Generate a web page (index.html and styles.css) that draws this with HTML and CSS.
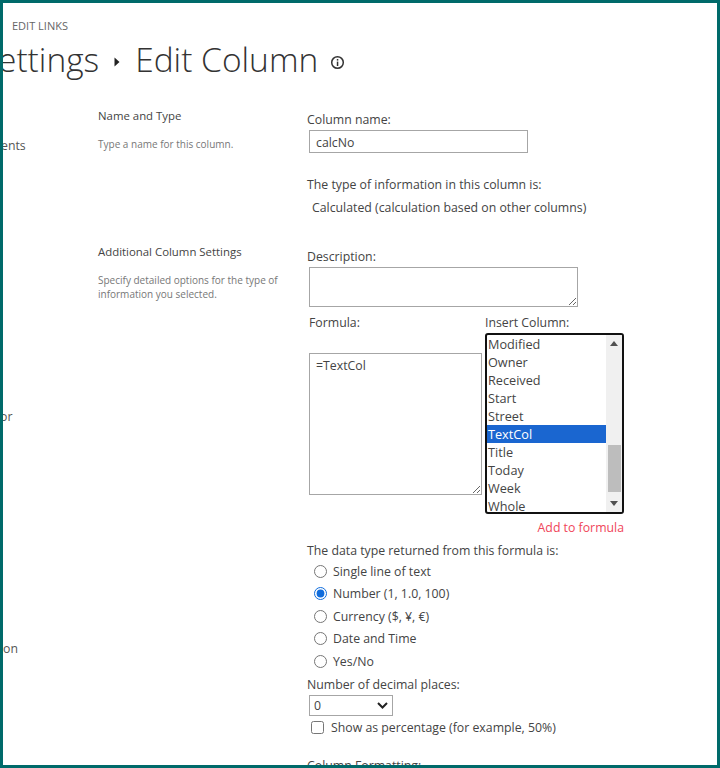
FILE: index.html
```html
<!DOCTYPE html>
<html lang="en">
<head>
  <meta charset="UTF-8" />
  <title>Settings - Edit Column</title>
  <link rel="stylesheet" href="styles.css">
</head>
<body>
  <div class="frame">
    <div class="edit-links">EDIT LINKS</div>

    <div class="title-row">
      <h1>ettings</h1>
      <svg class="crumb-arrow" width="6" height="10" viewBox="0 0 6 10"><path d="M0.5 0.5 L5.5 5 L0.5 9.5 Z" fill="#222"/></svg>
      <h1>Edit Column</h1>
      <svg class="info-icon" width="15" height="15" viewBox="0 0 15 15">
        <circle cx="7.5" cy="7.5" r="5.8" fill="none" stroke="#333" stroke-width="1.5"/>
        <rect x="6.8" y="6.6" width="1.5" height="4.4" fill="#333"/>
        <rect x="6.8" y="4" width="1.5" height="1.6" fill="#333"/>
      </svg>
    </div>

    <div class="content">
      <div class="nav">
        <div class="nav-item nav-a">ents</div>
        <div class="nav-item nav-b">or</div>
        <div class="nav-item nav-c">on</div>
      </div>

      <div class="sections">
        <div class="section-name">
          <h3>Name and Type</h3>
          <p>Type a name for this column.</p>
        </div>
        <div class="section-body section-first">
          <label class="field-label" for="colName">Column name:</label>
          <input class="text-input" id="colName" type="text" value="calcNo" />
          <div class="type-label">The type of information in this column is:</div>
          <div class="type-value">Calculated (calculation based on other columns)</div>
        </div>

        <div class="section-name name-gap">
          <h3>Additional Column Settings</h3>
          <p>Specify detailed options for the type of information you selected.</p>
        </div>
        <div class="section-body body-gap">
          <label class="field-label" for="desc">Description:</label>
          <textarea class="desc-input" id="desc"></textarea>

          <div class="formula-row">
            <div class="formula-col">
              <label class="field-label" for="formula">Formula:</label>
              <textarea class="formula-input" id="formula">=TextCol</textarea>
            </div>
            <div class="insert-col">
              <div class="field-label">Insert Column:</div>
              <div class="listbox">
                <div class="list-items">
                  <div class="list-item">Modified</div>
                  <div class="list-item">Owner</div>
                  <div class="list-item">Received</div>
                  <div class="list-item">Start</div>
                  <div class="list-item">Street</div>
                  <div class="list-item selected">TextCol</div>
                  <div class="list-item">Title</div>
                  <div class="list-item">Today</div>
                  <div class="list-item">Week</div>
                  <div class="list-item">Whole</div>
                </div>
                <div class="scrollbar">
                  <svg width="8" height="5" viewBox="0 0 8 5"><path d="M4 0 L8 5 L0 5 Z" fill="#505050"/></svg>
                  <div class="scroll-track"><div class="scroll-thumb"></div></div>
                  <svg width="8" height="5" viewBox="0 0 8 5"><path d="M0 0 L8 0 L4 5 Z" fill="#505050"/></svg>
                </div>
              </div>
              <div class="add-link">Add to formula</div>
            </div>
          </div>

          <div class="return-label">The data type returned from this formula is:</div>
          <div class="radios">
            <label class="radio-row"><input type="radio" name="rt" />Single line of text</label>
            <label class="radio-row"><input type="radio" name="rt" checked />Number (1, 1.0, 100)</label>
            <label class="radio-row"><input type="radio" name="rt" />Currency ($, ¥, €)</label>
            <label class="radio-row"><input type="radio" name="rt" />Date and Time</label>
            <label class="radio-row"><input type="radio" name="rt" />Yes/No</label>
          </div>
          <label class="decimal-label" for="decimals">Number of decimal places:</label>
          <div class="select-wrap">
            <select class="decimal-select" id="decimals"><option>0</option></select>
            <svg class="select-chevron" width="11" height="7" viewBox="0 0 11 7"><path d="M1 1 L5.5 5.5 L10 1" fill="none" stroke="#222" stroke-width="2"/></svg>
          </div>
          <label class="check-row"><input type="checkbox" />Show as percentage (for example, 50%)</label>
          <div class="formatting-label">Column Formatting:</div>
        </div>
      </div>
    </div>
  </div>
</body>
</html>
```

FILE: styles.css
```css
html, body {
  margin: 0;
  height: 100%;
  overflow: hidden;
}

body {
  font-family: "Open Sans", "Noto Sans", sans-serif;
  font-size: 12.3px;
  color: #444;
  background-color: #fff;
}

.frame {
  box-sizing: border-box;
  width: 720px;
  height: 768px;
  border: 3px solid #006a6a;
  overflow: hidden;
  background-color: #fff;
}

.edit-links {
  margin: 15px 0 0 9px;
  font-size: 11px;
  line-height: 16px;
  color: #666;
}

.title-row {
  display: flex;
  align-items: center;
  height: 46px;
  margin: 2px 0 0 -5px;
}

h1 {
  margin: 0;
  font-size: 33.5px;
  font-weight: 300;
  line-height: 46px;
  color: #333;
}

.crumb-arrow {
  margin: 5px 15px 0 15px;
}

.info-icon {
  margin: 6px 0 0 12px;
}

.content {
  display: flex;
  margin-top: 25px;
}

.nav {
  width: 95px;
  flex-shrink: 0;
}

.nav-item {
  font-size: 12.3px;
  line-height: 18px;
  color: #555;
}

.nav-a { margin: 30px 0 0 -2px; }
.nav-b { margin: 253px 0 0 -3px; }
.nav-c { margin-top: 214px; }

.sections {
  display: grid;
  grid-template-columns: 209px 1fr;
  align-content: start;
}

.section-name h3 {
  margin: 0;
  font-size: 11.4px;
  font-weight: 400;
  line-height: 18px;
  color: #444;
}

.section-name p {
  margin: 12px 0 0;
  width: 190px;
  font-size: 10px;
  line-height: 14px;
  color: #777;
}

.name-gap {
  margin-top: 26px;
}

.body-gap {
  margin-top: 31px;
}

.section-body {
  display: flex;
  flex-direction: column;
  align-items: flex-start;
}

.section-first {
  padding-top: 4px;
}

.field-label {
  display: block;
  line-height: 18px;
}

.text-input {
  box-sizing: border-box;
  width: 219px;
  height: 23px;
  margin: 1px 0 0 2px;
  padding: 2px 6px 0;
  border: 1px solid #a6a6a6;
  font-family: inherit;
  font-size: 12.3px;
  color: #444;
}

.type-label {
  margin-top: 23px;
  line-height: 18px;
}

.type-value {
  margin: 5px 0 0 5px;
  line-height: 18px;
}

.desc-input {
  box-sizing: border-box;
  width: 269px;
  height: 40px;
  margin: 1px 0 0 2px;
  border: 1px solid #a6a6a6;
  display: block;
}

.formula-row {
  display: flex;
  margin: 0 0 0 2px;
}

.formula-col {
  width: 176px;
  padding-top: 7px;
}

.formula-input {
  display: block;
  box-sizing: border-box;
  width: 173px;
  height: 142px;
  margin-top: 21px;
  padding: 3px 6px;
  border: 1px solid #a6a6a6;
  font-family: inherit;
  font-size: 12.3px;
  color: #444;
}

.insert-col {
  padding-top: 7px;
}

.listbox {
  box-sizing: border-box;
  display: flex;
  width: 139px;
  height: 181px;
  margin-top: 1px;
  border: 2px solid #111;
  border-radius: 3px;
  overflow: hidden;
}

.list-items {
  flex: 1;
}

.list-item {
  height: 18px;
  padding-left: 1px;
  font-size: 12.7px;
  line-height: 18px;
  color: #444;
}

.selected {
  background-color: #1a66d0;
  color: #fff;
}

.scrollbar {
  display: flex;
  flex-direction: column;
  align-items: center;
  width: 16px;
  padding: 6px 0;
  box-sizing: border-box;
  background-color: #f0f0f0;
}

.scroll-track {
  flex: 1;
  align-self: stretch;
  display: flex;
  align-items: flex-end;
  padding: 0 1px 9px 2px;
}

.scroll-thumb {
  width: 100%;
  height: 47px;
  background-color: #bdbdbd;
}

.add-link {
  margin-top: 5px;
  text-align: right;
  line-height: 18px;
  color: #f0465a;
}

.return-label {
  margin-top: 5px;
  line-height: 18px;
}

.radios {
  margin-left: 6px;
}

.radio-row {
  display: flex;
  align-items: center;
  height: 22.5px;
}

.radio-row input {
  width: 13px;
  height: 13px;
  margin: 0 6px 0 1px;
  accent-color: #0f6cdc;
}

.decimal-label {
  margin-top: 3px;
  line-height: 18px;
}

.select-wrap {
  position: relative;
  width: 84px;
  height: 21px;
  margin: 1px 0 0 2px;
}

.decimal-select {
  appearance: none;
  box-sizing: border-box;
  width: 100%;
  height: 21px;
  padding-left: 4px;
  border: 1px solid #a6a6a6;
  border-radius: 0;
  background-color: #fff;
  font-family: inherit;
  font-size: 12.3px;
  color: #444;
}

.select-chevron {
  position: absolute;
  right: 5px;
  top: 7px;
  pointer-events: none;
}

.check-row {
  display: flex;
  align-items: center;
  height: 18px;
  margin: 3px 0 0 4px;
}

.check-row input {
  width: 13px;
  height: 13px;
  margin: 0 7px 0 0;
}

.formatting-label {
  margin-top: 20px;
  line-height: 18px;
}
```
